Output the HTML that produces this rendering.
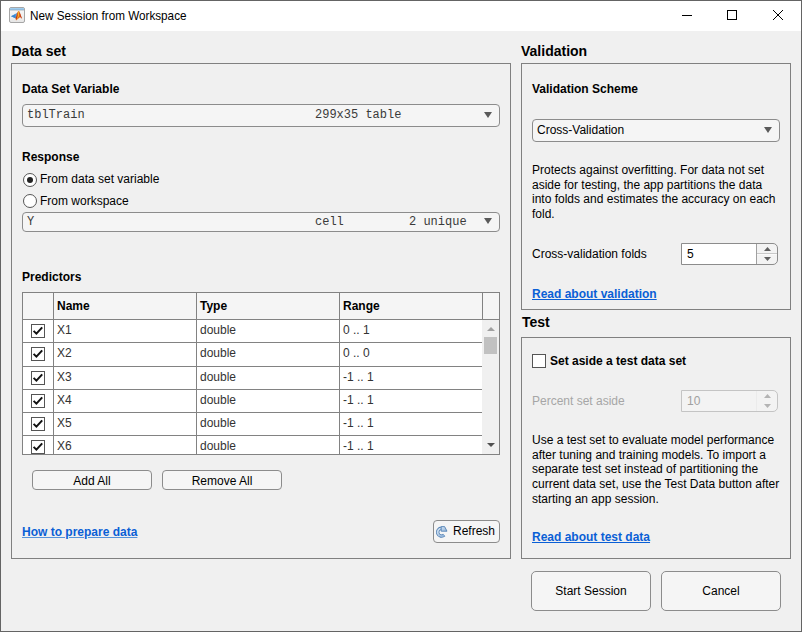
<!DOCTYPE html>
<html><head><meta charset="utf-8"><title>New Session from Workspace</title>
<style>
html,body{margin:0;padding:0;width:802px;height:632px;overflow:hidden;background:#f0f0f0}
body{position:relative;font-family:"Liberation Sans", sans-serif;font-size:12px;color:#000}
.t{position:absolute;white-space:nowrap;font-family:"Liberation Sans", sans-serif;font-size:12px}
</style></head><body>
<div style="position:absolute;left:0px;top:0px;width:802px;height:632px;box-sizing:border-box;background:#f0f0f0;border:1px solid #646464"></div>
<div style="position:absolute;left:1px;top:1px;width:800px;height:30px;box-sizing:border-box;background:#fff"></div>
<svg style="position:absolute;left:9px;top:7px" width="16" height="16" viewBox="0 0 16 16">
<defs><linearGradient id="tb" x1="0" y1="0" x2="0" y2="1"><stop offset="0" stop-color="#b5d9f3"/><stop offset="1" stop-color="#6aaee3"/></linearGradient>
<linearGradient id="bg" x1="0" y1="0" x2="0" y2="1"><stop offset="0" stop-color="#fafafa"/><stop offset="1" stop-color="#e6e6e6"/></linearGradient></defs>
<rect x="0.5" y="0.5" width="15" height="15" rx="1.5" fill="url(#bg)" stroke="#a6a6a6"/>
<rect x="1" y="1" width="14" height="1.8" fill="url(#tb)"/>
<rect x="1" y="2.8" width="14" height="0.6" fill="#9aa6b0"/>
<path d="M2 9.3 L8 5.9 L8.3 8 L6.6 11.2 Z" fill="#4f9be0"/>
<path d="M2 9.3 L6 7.6 L6.6 11.2 Z" fill="#3a86d0"/>
<path d="M8 5.9 L9.3 4 L10.4 4.6 L13 11.8 L11.2 10 L7 13.6 L6.6 11.2 Z" fill="#e0641e"/>
<path d="M8 5.9 L8.6 8.4 L7.3 12.6 L6.6 11.2 L8.3 8 Z" fill="#b8321a"/>
<path d="M9.3 4.2 L10.2 4.6 L9.9 9 L7.6 13.3 L8.8 9 Z" fill="#f5bd2a"/>
<path d="M10.4 4.6 L13 11.8 L11.3 10.1 Z" fill="#c23c1c"/>
</svg>
<div class="t" style="left:30px;top:8px;font-size:13px;font-weight:normal;color:#000;font-family:'Liberation Sans', sans-serif;transform:scaleX(0.9);transform-origin:0 0;">New Session from Workspace</div>
<div style="position:absolute;left:682px;top:15px;width:10px;height:1px;box-sizing:border-box;background:#000"></div>
<div style="position:absolute;left:727px;top:10px;width:10px;height:10px;box-sizing:border-box;border:1px solid #000"></div>
<svg style="position:absolute;left:773px;top:10px" width="10" height="10" viewBox="0 0 10 10" shape-rendering="crispEdges" fill="#000"><rect x="0" y="0" width="1" height="1"/><rect x="9" y="0" width="1" height="1"/><rect x="1" y="1" width="1" height="1"/><rect x="8" y="1" width="1" height="1"/><rect x="2" y="2" width="1" height="1"/><rect x="7" y="2" width="1" height="1"/><rect x="3" y="3" width="1" height="1"/><rect x="6" y="3" width="1" height="1"/><rect x="4" y="4" width="1" height="1"/><rect x="5" y="4" width="1" height="1"/><rect x="5" y="5" width="1" height="1"/><rect x="4" y="5" width="1" height="1"/><rect x="6" y="6" width="1" height="1"/><rect x="3" y="6" width="1" height="1"/><rect x="7" y="7" width="1" height="1"/><rect x="2" y="7" width="1" height="1"/><rect x="8" y="8" width="1" height="1"/><rect x="1" y="8" width="1" height="1"/><rect x="9" y="9" width="1" height="1"/><rect x="0" y="9" width="1" height="1"/></svg>
<div class="t" style="left:11.5px;top:43px;font-size:14px;font-weight:bold;color:#000;font-family:'Liberation Sans', sans-serif;">Data set</div>
<div class="t" style="left:521px;top:43px;font-size:14px;font-weight:bold;color:#000;font-family:'Liberation Sans', sans-serif;">Validation</div>
<div class="t" style="left:522px;top:314px;font-size:14px;font-weight:bold;color:#000;font-family:'Liberation Sans', sans-serif;">Test</div>
<div style="position:absolute;left:11px;top:63px;width:500px;height:496px;box-sizing:border-box;border:1px solid #808080"></div>
<div style="position:absolute;left:521px;top:63px;width:270px;height:247px;box-sizing:border-box;border:1px solid #808080"></div>
<div style="position:absolute;left:521px;top:337px;width:270px;height:222px;box-sizing:border-box;border:1px solid #808080"></div>
<div class="t" style="left:22px;top:82px;font-size:12px;font-weight:bold;color:#000;font-family:'Liberation Sans', sans-serif;">Data Set Variable</div>
<div style="position:absolute;left:22px;top:104px;width:478px;height:23px;box-sizing:border-box;background:#f5f5f5;border:1px solid #8c8c8c;border-radius:4px"></div>
<div class="t" style="left:27px;top:108px;font-size:12px;font-weight:normal;color:#3a3a3a;font-family:'Liberation Mono', monospace;">tblTrain</div>
<div class="t" style="left:315px;top:108px;font-size:12px;font-weight:normal;color:#3a3a3a;font-family:'Liberation Mono', monospace;">299x35 table</div>
<svg style="position:absolute;left:484px;top:112px" width="8" height="6" viewBox="0 0 8 6"><path d="M0 0 L8 0 L4 6 Z" fill="#5a5a5a"/></svg>
<div class="t" style="left:22px;top:150px;font-size:12px;font-weight:bold;color:#000;font-family:'Liberation Sans', sans-serif;">Response</div>
<svg style="position:absolute;left:23px;top:173px" width="14" height="14" viewBox="0 0 14 14"><circle cx="7" cy="7" r="6.5" fill="#fff" stroke="#555"/><circle cx="7" cy="7" r="3" fill="#222"/></svg>
<div class="t" style="left:40px;top:172px;font-size:12px;font-weight:normal;color:#000;font-family:'Liberation Sans', sans-serif;">From data set variable</div>
<svg style="position:absolute;left:23px;top:194px" width="14" height="14" viewBox="0 0 14 14"><circle cx="7" cy="7" r="6.5" fill="#fff" stroke="#555"/></svg>
<div class="t" style="left:40px;top:194px;font-size:12px;font-weight:normal;color:#000;font-family:'Liberation Sans', sans-serif;">From workspace</div>
<div style="position:absolute;left:22px;top:212px;width:478px;height:20px;box-sizing:border-box;background:#f5f5f5;border:1px solid #8c8c8c;border-radius:4px"></div>
<div class="t" style="left:27px;top:215px;font-size:12px;font-weight:normal;color:#3a3a3a;font-family:'Liberation Mono', monospace;">Y</div>
<div class="t" style="left:315px;top:215px;font-size:12px;font-weight:normal;color:#3a3a3a;font-family:'Liberation Mono', monospace;">cell</div>
<div class="t" style="left:409px;top:215px;font-size:12px;font-weight:normal;color:#3a3a3a;font-family:'Liberation Mono', monospace;">2 unique</div>
<svg style="position:absolute;left:484px;top:218px" width="8" height="6" viewBox="0 0 8 6"><path d="M0 0 L8 0 L4 6 Z" fill="#5a5a5a"/></svg>
<div class="t" style="left:22px;top:270px;font-size:12px;font-weight:bold;color:#000;font-family:'Liberation Sans', sans-serif;">Predictors</div>
<div style="position:absolute;left:22px;top:292px;width:478px;height:163px;box-sizing:border-box;background:#fff;border:1px solid #828282"></div>
<div style="position:absolute;left:23px;top:293px;width:476px;height:27px;box-sizing:border-box;background:#f5f5f5;border-bottom:1px solid #828282"></div>
<div style="position:absolute;left:53px;top:293px;width:1px;height:161px;box-sizing:border-box;background:#828282"></div>
<div style="position:absolute;left:196px;top:293px;width:1px;height:161px;box-sizing:border-box;background:#828282"></div>
<div style="position:absolute;left:339px;top:293px;width:1px;height:161px;box-sizing:border-box;background:#828282"></div>
<div style="position:absolute;left:482px;top:293px;width:1px;height:27px;box-sizing:border-box;background:#828282"></div>
<div class="t" style="left:57px;top:299px;font-size:12px;font-weight:bold;color:#000;font-family:'Liberation Sans', sans-serif;">Name</div>
<div class="t" style="left:200px;top:299px;font-size:12px;font-weight:bold;color:#000;font-family:'Liberation Sans', sans-serif;">Type</div>
<div class="t" style="left:343px;top:299px;font-size:12px;font-weight:bold;color:#000;font-family:'Liberation Sans', sans-serif;">Range</div>
<svg style="position:absolute;left:31px;top:324px" width="14" height="14" viewBox="0 0 14 14"><rect x="0.5" y="0.5" width="13" height="13" fill="#fff" stroke="#555"/><path d="M2.6 6.9 L5.4 9.6 L11.2 3.4" fill="none" stroke="#111" stroke-width="2"/></svg>
<div class="t" style="left:57px;top:323px;font-size:12px;font-weight:normal;color:#333;font-family:'Liberation Sans', sans-serif;">X1</div>
<div class="t" style="left:200px;top:323px;font-size:12px;font-weight:normal;color:#333;font-family:'Liberation Sans', sans-serif;">double</div>
<div class="t" style="left:343px;top:323px;font-size:12px;font-weight:normal;color:#333;font-family:'Liberation Sans', sans-serif;">0 .. 1</div>
<div style="position:absolute;left:23px;top:342px;width:460px;height:1px;box-sizing:border-box;background:#828282"></div>
<svg style="position:absolute;left:31px;top:347px" width="14" height="14" viewBox="0 0 14 14"><rect x="0.5" y="0.5" width="13" height="13" fill="#fff" stroke="#555"/><path d="M2.6 6.9 L5.4 9.6 L11.2 3.4" fill="none" stroke="#111" stroke-width="2"/></svg>
<div class="t" style="left:57px;top:346px;font-size:12px;font-weight:normal;color:#333;font-family:'Liberation Sans', sans-serif;">X2</div>
<div class="t" style="left:200px;top:346px;font-size:12px;font-weight:normal;color:#333;font-family:'Liberation Sans', sans-serif;">double</div>
<div class="t" style="left:343px;top:346px;font-size:12px;font-weight:normal;color:#333;font-family:'Liberation Sans', sans-serif;">0 .. 0</div>
<div style="position:absolute;left:23px;top:366px;width:460px;height:1px;box-sizing:border-box;background:#828282"></div>
<svg style="position:absolute;left:31px;top:371px" width="14" height="14" viewBox="0 0 14 14"><rect x="0.5" y="0.5" width="13" height="13" fill="#fff" stroke="#555"/><path d="M2.6 6.9 L5.4 9.6 L11.2 3.4" fill="none" stroke="#111" stroke-width="2"/></svg>
<div class="t" style="left:57px;top:370px;font-size:12px;font-weight:normal;color:#333;font-family:'Liberation Sans', sans-serif;">X3</div>
<div class="t" style="left:200px;top:370px;font-size:12px;font-weight:normal;color:#333;font-family:'Liberation Sans', sans-serif;">double</div>
<div class="t" style="left:343px;top:370px;font-size:12px;font-weight:normal;color:#333;font-family:'Liberation Sans', sans-serif;">-1 .. 1</div>
<div style="position:absolute;left:23px;top:389px;width:460px;height:1px;box-sizing:border-box;background:#828282"></div>
<svg style="position:absolute;left:31px;top:394px" width="14" height="14" viewBox="0 0 14 14"><rect x="0.5" y="0.5" width="13" height="13" fill="#fff" stroke="#555"/><path d="M2.6 6.9 L5.4 9.6 L11.2 3.4" fill="none" stroke="#111" stroke-width="2"/></svg>
<div class="t" style="left:57px;top:393px;font-size:12px;font-weight:normal;color:#333;font-family:'Liberation Sans', sans-serif;">X4</div>
<div class="t" style="left:200px;top:393px;font-size:12px;font-weight:normal;color:#333;font-family:'Liberation Sans', sans-serif;">double</div>
<div class="t" style="left:343px;top:393px;font-size:12px;font-weight:normal;color:#333;font-family:'Liberation Sans', sans-serif;">-1 .. 1</div>
<div style="position:absolute;left:23px;top:412px;width:460px;height:1px;box-sizing:border-box;background:#828282"></div>
<svg style="position:absolute;left:31px;top:417px" width="14" height="14" viewBox="0 0 14 14"><rect x="0.5" y="0.5" width="13" height="13" fill="#fff" stroke="#555"/><path d="M2.6 6.9 L5.4 9.6 L11.2 3.4" fill="none" stroke="#111" stroke-width="2"/></svg>
<div class="t" style="left:57px;top:416px;font-size:12px;font-weight:normal;color:#333;font-family:'Liberation Sans', sans-serif;">X5</div>
<div class="t" style="left:200px;top:416px;font-size:12px;font-weight:normal;color:#333;font-family:'Liberation Sans', sans-serif;">double</div>
<div class="t" style="left:343px;top:416px;font-size:12px;font-weight:normal;color:#333;font-family:'Liberation Sans', sans-serif;">-1 .. 1</div>
<div style="position:absolute;left:23px;top:435px;width:460px;height:1px;box-sizing:border-box;background:#828282"></div>
<svg style="position:absolute;left:31px;top:440px" width="14" height="14" viewBox="0 0 14 14"><rect x="0.5" y="0.5" width="13" height="13" fill="#fff" stroke="#555"/><path d="M2.6 6.9 L5.4 9.6 L11.2 3.4" fill="none" stroke="#111" stroke-width="2"/></svg>
<div class="t" style="left:57px;top:439px;font-size:12px;font-weight:normal;color:#333;font-family:'Liberation Sans', sans-serif;">X6</div>
<div class="t" style="left:200px;top:439px;font-size:12px;font-weight:normal;color:#333;font-family:'Liberation Sans', sans-serif;">double</div>
<div class="t" style="left:343px;top:439px;font-size:12px;font-weight:normal;color:#333;font-family:'Liberation Sans', sans-serif;">-1 .. 1</div>
<div style="position:absolute;left:482px;top:320px;width:17px;height:134px;box-sizing:border-box;background:#f0f0f0"></div>
<div style="position:absolute;left:484px;top:337px;width:13px;height:17px;box-sizing:border-box;background:#c1c1c1"></div>
<svg style="position:absolute;left:487px;top:327px" width="8" height="4" viewBox="0 0 8 4"><path d="M0 4 L8 4 L4 0 Z" fill="#a0a0a0"/></svg>
<svg style="position:absolute;left:487px;top:443px" width="8" height="4" viewBox="0 0 8 4"><path d="M0 0 L8 0 L4 4 Z" fill="#505050"/></svg>
<div style="position:absolute;left:32px;top:470px;width:120px;height:20px;box-sizing:border-box;background:#f5f5f5;border:1px solid #8c8c8c;border-radius:4px"></div>
<div class="t" style="left:32px;top:470px;width:120px;height:20px;line-height:20px;padding-top:1px;box-sizing:border-box;text-align:center;font-size:12px">Add All</div>
<div style="position:absolute;left:162px;top:470px;width:120px;height:20px;box-sizing:border-box;background:#f5f5f5;border:1px solid #8c8c8c;border-radius:4px"></div>
<div class="t" style="left:162px;top:470px;width:120px;height:20px;line-height:20px;padding-top:1px;box-sizing:border-box;text-align:center;font-size:12px">Remove All</div>
<div class="t" style="left:22px;top:525px;font-size:12px;font-weight:bold;color:#0a5fd6;font-family:'Liberation Sans', sans-serif;"><u style="text-decoration-color:#5592da">How to prepare data</u></div>
<div style="position:absolute;left:433px;top:520px;width:67px;height:23px;box-sizing:border-box;background:#f5f5f5;border:1px solid #8c8c8c;border-radius:4px"></div>
<div class="t" style="left:433px;top:520px;width:67px;height:23px;line-height:23px;padding-top:1px;box-sizing:border-box;text-align:center;font-size:12px"></div>
<div class="t" style="left:453px;top:524px;font-size:12px;font-weight:normal;color:#000;font-family:'Liberation Sans', sans-serif;">Refresh</div>
<svg style="position:absolute;left:436px;top:526px" width="12" height="12" viewBox="0 0 12 12"><defs><linearGradient id="rf" x1="0" y1="0" x2="1" y2="1"><stop offset="0" stop-color="#d6e6f5"/><stop offset="1" stop-color="#8db0d6"/></linearGradient></defs><path d="M5.6 2.3 A3.9 3.9 0 1 0 8.2 9.1" fill="none" stroke="#5582b4" stroke-width="3.4"/><path d="M5.6 2.3 A3.9 3.9 0 1 0 8.2 9.1" fill="none" stroke="url(#rf)" stroke-width="1.8"/><path d="M5.2 0.6 L8.6 0.6 L11 5.2 L5.2 5.2 Z" fill="url(#rf)" stroke="#5582b4" stroke-width="0.9" stroke-linejoin="round"/></svg>
<div class="t" style="left:532px;top:82px;font-size:12px;font-weight:bold;color:#000;font-family:'Liberation Sans', sans-serif;">Validation Scheme</div>
<div style="position:absolute;left:532px;top:119px;width:248px;height:23px;box-sizing:border-box;background:#f5f5f5;border:1px solid #8c8c8c;border-radius:4px"></div>
<div class="t" style="left:537px;top:123px;font-size:12px;font-weight:normal;color:#000;font-family:'Liberation Sans', sans-serif;">Cross-Validation</div>
<svg style="position:absolute;left:764px;top:127px" width="8" height="6" viewBox="0 0 8 6"><path d="M0 0 L8 0 L4 6 Z" fill="#5a5a5a"/></svg>
<div class="t" style="left:532px;top:163px;font-size:12px;font-weight:normal;color:#000;font-family:'Liberation Sans', sans-serif;">Protects against overfitting. For data not set</div>
<div class="t" style="left:532px;top:178px;font-size:12px;font-weight:normal;color:#000;font-family:'Liberation Sans', sans-serif;">aside for testing, the app partitions the data</div>
<div class="t" style="left:532px;top:192px;font-size:12px;font-weight:normal;color:#000;font-family:'Liberation Sans', sans-serif;">into folds and estimates the accuracy on each</div>
<div class="t" style="left:532px;top:207px;font-size:12px;font-weight:normal;color:#000;font-family:'Liberation Sans', sans-serif;">fold.</div>
<div class="t" style="left:532px;top:247px;font-size:12px;font-weight:normal;color:#000;font-family:'Liberation Sans', sans-serif;">Cross-validation folds</div>
<div style="position:absolute;left:681px;top:243px;width:97px;height:22px;box-sizing:border-box;background:#f3f3f3;border:1px solid #8c8c8c;border-radius:0 5px 5px 0"></div>
<div style="position:absolute;left:682px;top:244px;width:75px;height:20px;box-sizing:border-box;background:#fff"></div>
<div style="position:absolute;left:756px;top:244px;width:1px;height:20px;box-sizing:border-box;background:#a0a0a0"></div>
<div style="position:absolute;left:757px;top:253px;width:20px;height:1px;box-sizing:border-box;background:#c8c8c8"></div>
<div style="position:absolute;left:757px;top:254px;width:20px;height:1px;box-sizing:border-box;background:#fafafa"></div>
<svg style="position:absolute;left:764px;top:247px" width="7" height="4" viewBox="0 0 7 4"><path d="M0 4 L7 4 L3.5 0 Z" fill="#606060"/></svg>
<svg style="position:absolute;left:764px;top:257px" width="7" height="4" viewBox="0 0 7 4"><path d="M0 0 L7 0 L3.5 4 Z" fill="#606060"/></svg>
<div class="t" style="left:687px;top:247px;font-size:12px;font-weight:normal;color:#000;font-family:'Liberation Sans', sans-serif;">5</div>
<div class="t" style="left:532px;top:287px;font-size:12px;font-weight:bold;color:#0a5fd6;font-family:'Liberation Sans', sans-serif;"><u>Read about validation</u></div>
<svg style="position:absolute;left:532px;top:354px" width="14" height="14" viewBox="0 0 14 14"><rect x="0.5" y="0.5" width="13" height="13" fill="#fff" stroke="#555"/></svg>
<div class="t" style="left:550px;top:354px;font-size:12px;font-weight:bold;color:#000;font-family:'Liberation Sans', sans-serif;">Set aside a test data set</div>
<div class="t" style="left:532px;top:394px;font-size:12px;font-weight:normal;color:#a6a6a6;font-family:'Liberation Sans', sans-serif;">Percent set aside</div>
<div style="position:absolute;left:681px;top:390px;width:97px;height:22px;box-sizing:border-box;background:#f3f3f3;border:1px solid #c4c4c4;border-radius:0 5px 5px 0"></div>
<div style="position:absolute;left:682px;top:391px;width:75px;height:20px;box-sizing:border-box;background:#f3f3f3"></div>
<div style="position:absolute;left:756px;top:391px;width:1px;height:20px;box-sizing:border-box;background:#ebebeb"></div>
<svg style="position:absolute;left:764px;top:394px" width="7" height="4" viewBox="0 0 7 4"><path d="M0 4 L7 4 L3.5 0 Z" fill="#b4b4b4"/></svg>
<svg style="position:absolute;left:764px;top:404px" width="7" height="4" viewBox="0 0 7 4"><path d="M0 0 L7 0 L3.5 4 Z" fill="#b4b4b4"/></svg>
<div class="t" style="left:687px;top:394px;font-size:12px;font-weight:normal;color:#a0a0a0;font-family:'Liberation Sans', sans-serif;">10</div>
<div class="t" style="left:532px;top:433px;font-size:12px;font-weight:normal;color:#000;font-family:'Liberation Sans', sans-serif;">Use a test set to evaluate model performance</div>
<div class="t" style="left:532px;top:448px;font-size:12px;font-weight:normal;color:#000;font-family:'Liberation Sans', sans-serif;">after tuning and training models. To import a</div>
<div class="t" style="left:532px;top:462px;font-size:12px;font-weight:normal;color:#000;font-family:'Liberation Sans', sans-serif;">separate test set instead of partitioning the</div>
<div class="t" style="left:532px;top:477px;font-size:12px;font-weight:normal;color:#000;font-family:'Liberation Sans', sans-serif;">current data set, use the Test Data button after</div>
<div class="t" style="left:532px;top:492px;font-size:12px;font-weight:normal;color:#000;font-family:'Liberation Sans', sans-serif;">starting an app session.</div>
<div class="t" style="left:532px;top:530px;font-size:12px;font-weight:bold;color:#0a5fd6;font-family:'Liberation Sans', sans-serif;"><u>Read about test data</u></div>
<div style="position:absolute;left:531px;top:571px;width:120px;height:40px;box-sizing:border-box;background:#f5f5f5;border:1px solid #8c8c8c;border-radius:5px"></div>
<div class="t" style="left:531px;top:571px;width:120px;height:40px;line-height:40px;padding-top:0px;box-sizing:border-box;text-align:center;font-size:12px">Start Session</div>
<div style="position:absolute;left:661px;top:571px;width:120px;height:40px;box-sizing:border-box;background:#f5f5f5;border:1px solid #8c8c8c;border-radius:5px"></div>
<div class="t" style="left:661px;top:571px;width:120px;height:40px;line-height:40px;padding-top:0px;box-sizing:border-box;text-align:center;font-size:12px">Cancel</div>
</body></html>
